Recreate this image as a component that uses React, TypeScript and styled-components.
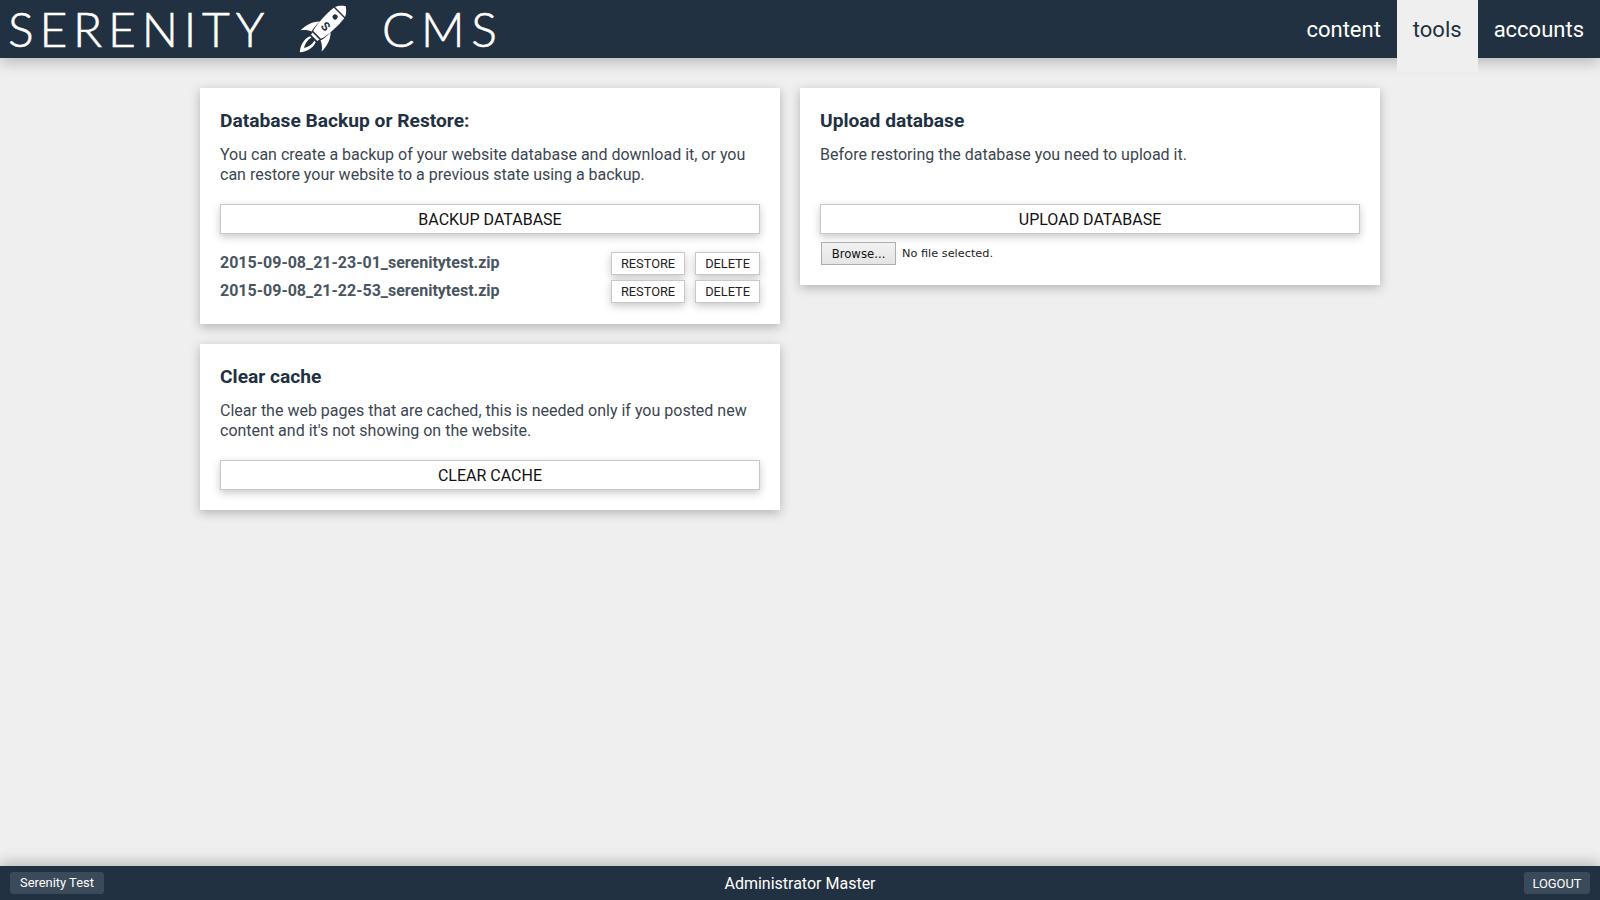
import React from "react";
import styled, { createGlobalStyle } from "styled-components";

const Global = createGlobalStyle`
  html, body { margin: 0; padding: 0; height: 100%; background: #efefef; }
  body { font-family: Roboto, "Liberation Sans", sans-serif; color: #3c4651; }
  #root { height: 100%; }
  * { box-sizing: border-box; }
`;

const Page = styled.div`
  height: 900px;
  display: flex;
  flex-direction: column;
  background: #efefef;
`;

const Header = styled.header`
  height: 58px;
  flex: none;
  display: flex;
  justify-content: space-between;
  background: #223141;
  box-shadow: 0 4px 14px rgba(0, 0, 0, 0.24);
`;

const Logo = styled.div`
  display: flex;
  align-items: center;
  padding-left: 8px;
  color: #fff;
  font-family: Lato, sans-serif;
  font-weight: 300;
  font-size: 48px;
  line-height: 58px;
  -webkit-text-stroke: 0.6px #fff;
`;

const LogoWord = styled.span<{ $spacing: number }>`
  letter-spacing: ${(p) => p.$spacing}px;
  white-space: nowrap;
`;

const Rocket = styled.svg`
  width: 50px;
  height: 50px;
  margin: 0 35px 0 27px;
  flex: none;
`;

const Nav = styled.nav`
  display: flex;
`;

const NavItem = styled.a<{ $active?: boolean }>`
  display: block;
  height: ${(p) => (p.$active ? "72px" : "58px")};
  padding: 0 16px;
  font-size: 22px;
  line-height: 60px;
  color: ${(p) => (p.$active ? "#223141" : "#fff")};
  background: ${(p) => (p.$active ? "#efefef" : "transparent")};
`;

const Main = styled.main`
  flex: 1;
  padding: 30px 0 0 200px;
  display: grid;
  grid-template-columns: 580px 580px;
  column-gap: 20px;
  align-items: start;
`;

const Column = styled.div`
  display: flex;
  flex-direction: column;
  gap: 20px;
`;

const Card = styled.section`
  background: #fff;
  padding: 20px;
  box-shadow: 0 3px 10px rgba(0, 0, 0, 0.25);
`;

const Title = styled.h2`
  margin: 1px 0 12px;
  font-size: 19.2px;
  line-height: 24px;
  font-weight: 700;
  color: #223141;
`;

const Text = styled.p<{ $lines?: number }>`
  margin: 0 0 19px;
  font-size: 16px;
  line-height: 20px;
  min-height: ${(p) => (p.$lines ?? 2) * 20}px;
  color: #3c4651;
`;

const WideButton = styled.button`
  display: block;
  width: 100%;
  height: 30px;
  padding: 0;
  background: #fff;
  border: 1px solid #c8c8c8;
  box-shadow: 0 3px 8px rgba(0, 0, 0, 0.22);
  font-family: Roboto, sans-serif;
  font-size: 16px;
  color: #111;
`;

const FileList = styled.div`
  margin: 18px 0 1px;
  display: flex;
  flex-direction: column;
  gap: 5px;
`;

const FileRow = styled.div`
  display: flex;
  align-items: center;
  height: 23px;
  gap: 10px;
`;

const FileName = styled.span`
  flex: 1;
  padding-bottom: 2px;
  font-size: 16px;
  font-weight: 700;
  color: #4a5561;
`;

const SmallButton = styled.button`
  height: 23px;
  padding: 0 9px;
  background: #fff;
  border: 1px solid #c8c8c8;
  box-shadow: 0 3px 8px rgba(0, 0, 0, 0.22);
  font-family: Roboto, sans-serif;
  font-size: 12.8px;
  color: #222;
`;

const FilePicker = styled.div`
  margin: 8px 0 0 1px;
  display: flex;
  align-items: center;
  gap: 6px;
  height: 23px;
  font-family: "DejaVu Sans", sans-serif;
  font-size: 11.3px;
  color: #222;
`;

const Browse = styled.button`
  width: 75px;
  height: 23px;
  padding: 0;
  border: 1px solid #adadad;
  background: linear-gradient(#f2f2f2, #e4e4e4);
  font-family: "DejaVu Sans", sans-serif;
  font-size: 11.7px;
  color: #111;
`;

const Footer = styled.footer`
  height: 34px;
  flex: none;
  display: grid;
  grid-template-columns: 1fr auto 1fr;
  align-items: center;
  padding: 0 10px;
  background: #223141;
  color: #fff;
  font-size: 16px;
  box-shadow: 0 -4px 14px rgba(0, 0, 0, 0.22);
`;

const Badge = styled.span<{ $right?: boolean }>`
  justify-self: ${(p) => (p.$right ? "end" : "start")};
  height: 22px;
  padding: ${(p) => (p.$right ? "1px 8.5px 0" : "0 10px")};
  line-height: 22px;
  font-size: 12.9px;
  background: #3b4a5a;
  border-radius: 3px;
  color: #fff;
`;

const files = ["2015-09-08_21-23-01_serenitytest.zip", "2015-09-08_21-22-53_serenitytest.zip"];

const RocketIcon = () => (
  <Rocket viewBox="0 0 50 50">
    <g transform="translate(19 32) rotate(45)" fill="#fff" stroke="none">
      <path d="M0 -42 C3 -40 6 -37 7 -34 L-7 -34 C-6 -37 -3 -40 0 -42Z" />
      <path d="M-7.4 -32.6 L7.4 -32.6 C8.6 -22 8 -10 5.5 -1.5 L-5.5 -1.5 C-8 -10 -8.6 -22 -7.4 -32.6Z" />
      <path d="M-5 0 L5 0 L4.4 2.6 L-4.4 2.6Z" />
      <path d="M-7.6 -13 C-13 -8 -15 0 -15 7 C-12 3 -9 1 -6.4 0 C-7.4 -4 -7.8 -8 -7.6 -13Z" />
      <path d="M7.6 -13 C13 -8 15 0 15 7 C12 3 9 1 6.4 0 C7.4 -4 7.8 -8 7.6 -13Z" />
      <path d="M-4 4.4 C-6.5 10 -5 17 0 23 C5 17 6.5 10 4 4.4 L2.2 4.4 C3.2 9 2.4 13 0 17 C-2.4 13 -3.2 9 -2.2 4.4Z" />
      <circle cx="0" cy="-27" r="2.6" fill="#223141" />
      <text x="0" y="-9.5" textAnchor="middle" fontFamily="Roboto, sans-serif" fontWeight="700" fontSize="12" fill="#223141" style={{ WebkitTextStroke: "0" }}>S</text>
    </g>
  </Rocket>
);

export default function App() {
  return (
    <>
      <Global />
      <Page>
        <Header>
          <Logo>
            <LogoWord $spacing={5.8}>SERENITY</LogoWord>
            <RocketIcon />
            <LogoWord $spacing={6.6}>CMS</LogoWord>
          </Logo>
          <Nav>
            <NavItem>content</NavItem>
            <NavItem $active>tools</NavItem>
            <NavItem>accounts</NavItem>
          </Nav>
        </Header>
        <Main>
          <Column>
            <Card>
              <Title>Database Backup or Restore:</Title>
              <Text>You can create a backup of your website database and download it, or you can restore your website to a previous state using a backup.</Text>
              <WideButton>BACKUP DATABASE</WideButton>
              <FileList>
                {files.map((f) => (
                  <FileRow key={f}>
                    <FileName>{f}</FileName>
                    <SmallButton>RESTORE</SmallButton>
                    <SmallButton>DELETE</SmallButton>
                  </FileRow>
                ))}
              </FileList>
            </Card>
            <Card>
              <Title>Clear cache</Title>
              <Text>Clear the web pages that are cached, this is needed only if you posted new content and it's not showing on the website.</Text>
              <WideButton>CLEAR CACHE</WideButton>
            </Card>
          </Column>
          <Column>
            <Card>
              <Title>Upload database</Title>
              <Text>Before restoring the database you need to upload it.</Text>
              <WideButton>UPLOAD DATABASE</WideButton>
              <FilePicker>
                <Browse>Browse...</Browse>
                <span>No file selected.</span>
              </FilePicker>
            </Card>
          </Column>
        </Main>
        <Footer>
          <Badge>Serenity Test</Badge>
          <span>Administrator Master</span>
          <Badge $right>LOGOUT</Badge>
        </Footer>
      </Page>
    </>
  );
}
